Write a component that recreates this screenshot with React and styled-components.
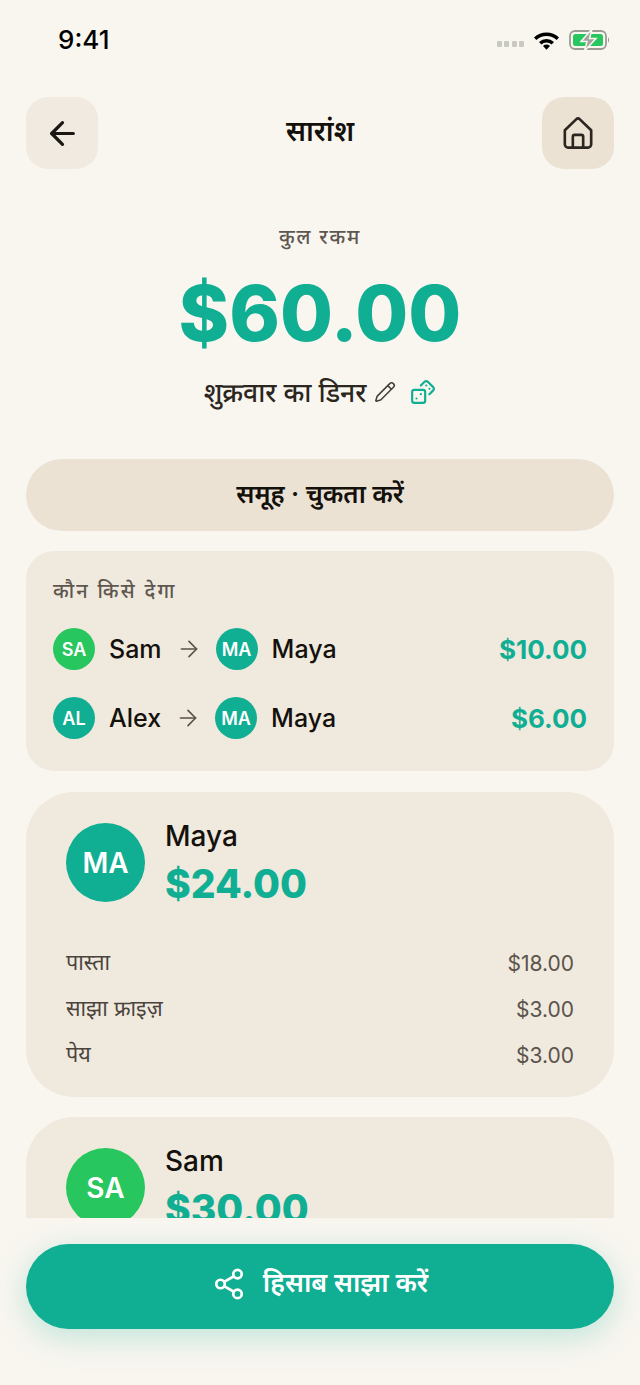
import React from "react";
import styled, { createGlobalStyle } from "styled-components";
import { ArrowLeft, ArrowRight, Dices, Pencil, Share2 } from "lucide-react";

const teal = "#10AE92";
const green = "#27C65E";

const settlements = [
  { from: "Sam", fromCode: "SA", fromColor: green, to: "Maya", amount: "$10.00" },
  { from: "Alex", fromCode: "AL", fromColor: teal, to: "Maya", amount: "$6.00" }
];

const people = [
  {
    name: "Maya",
    code: "MA",
    color: teal,
    total: "$24.00",
    items: [
      ["पास्ता", "$18.00"],
      ["साझा फ्राइज़", "$3.00"],
      ["पेय", "$3.00"]
    ]
  },
  { name: "Sam", code: "SA", color: green, total: "$30.00", items: [] }
];

export default function App() {
  return (
    <Screen>
      <GlobalStyle />
      <StatusBar>
        <Clock>9:41</Clock>
        <StatusIcons>
          <Signal>
            <i />
            <i />
            <i />
            <i />
          </Signal>
          <svg width="27" height="20" viewBox="0 0 27 20">
            <path d="M1 7.500a18 18 0 0 1 25 0l-2.400 2.500a14.500 14.500 0 0 0-20.200 0z" fill="#000" />
            <path d="M6 12a11 11 0 0 1 15 0l-2.400 2.500a7.500 7.500 0 0 0-10.200 0z" fill="#000" />
            <path d="M10 16a5 5 0 0 1 7 0l-3.500 3.800z" fill="#000" />
          </svg>
          <svg width="42" height="22" viewBox="0 0 42 22">
            <rect x="1" y="2" width="36" height="18" rx="5" fill="none" stroke="#9c9c96" strokeWidth="1.800" />
            <rect x="4" y="5" width="30" height="12" rx="2.500" fill={green} />
            <path d="M39 8.500c1.500.5 1.500 4.500 0 5z" fill="#9c9c96" />
            <path d="M23 0 12 12.500h6L15.500 22 27 9.500h-6.500z" fill="#a3a39e" stroke="#f9f6f0" strokeWidth="1.500" />
          </svg>
        </StatusIcons>
      </StatusBar>

      <Header>
        <IconButton>
          <ArrowLeft size={37} strokeWidth={2.100} color="#1b1712" />
        </IconButton>
        <Title>सारांश</Title>
        <IconButton $dark>
          <svg width="32" height="34" viewBox="0 0 34 36" fill="none" stroke="#2b2620" strokeWidth="2.800" strokeLinejoin="round">
            <path d="M3 15 15 3.500a2.900 2.900 0 0 1 4 0L31 15v15a3.500 3.500 0 0 1-3.500 3.500h-21A3.500 3.500 0 0 1 3 30z" />
            <path d="M11.500 33.500V22a2 2 0 0 1 2-2h7a2 2 0 0 1 2 2v11.500" />
          </svg>
        </IconButton>
      </Header>

      <Summary>
        <TotalLabel>कुल रकम</TotalLabel>
        <Total>$60.00</Total>
        <BillName>
          शुक्रवार का डिनर
          <Pencil size={22} strokeWidth={1.700} color="#45403a" />
          <DiceWrap>
            <Dices size={26} strokeWidth={2} color={teal} />
          </DiceWrap>
        </BillName>
      </Summary>

      <GroupPill>समूह · चुकता करें</GroupPill>

      <SettleCard>
        <SettleLabel>कौन किसे देगा</SettleLabel>
        {settlements.map(s => (
          <SettleRow key={s.from}>
            <SmallAvatar $color={s.fromColor}>{s.fromCode}</SmallAvatar>
            <RowName>{s.from}</RowName>
            <ArrowRight size={26} strokeWidth={1.500} color="#5b5044" />
            <SmallAvatar $color={teal}>MA</SmallAvatar>
            <RowName>{s.to}</RowName>
            <RowAmount>{s.amount}</RowAmount>
          </SettleRow>
        ))}
      </SettleCard>

      {people.map(p => (
        <PersonCard key={p.name}>
          <PersonHead>
            <BigAvatar $color={p.color}>{p.code}</BigAvatar>
            <div>
              <PersonName>{p.name}</PersonName>
              <PersonTotal>{p.total}</PersonTotal>
            </div>
          </PersonHead>
          {p.items.length > 0 && (
            <Items>
              {p.items.map(([label, price]) => (
                <Item key={label}>
                  <ItemLabel>{label}</ItemLabel>
                  <Price>{price}</Price>
                </Item>
              ))}
            </Items>
          )}
        </PersonCard>
      ))}

      <Footer>
        <ShareButton>
          <Share2 size={34} strokeWidth={1.900} color="#fff" />
          <span>हिसाब साझा करें</span>
        </ShareButton>
      </Footer>
    </Screen>
  );
}

const GlobalStyle = createGlobalStyle`
  html, body {
    margin: 0;
    padding: 0;
    background: #F9F6F0;
  }
  * {
    box-sizing: border-box;
  }
`;

const Screen = styled.div`
  position: relative;
  width: 640px;
  height: 1385px;
  overflow: hidden;
  padding: 0 26px;
  background: #F9F6F0;
  color: #14110d;
  font-family: Inter, "Noto Sans Devanagari", "Noto Sans", sans-serif;
`;

const StatusBar = styled.div`
  height: 97px;
  margin: 0 3px 0 32px;
  padding-top: 25px;
  display: flex;
  justify-content: space-between;
  align-items: flex-start;
`;

const Clock = styled.div`
  font-size: 26px;
  line-height: 30px;
  font-weight: 500;
  color: #000;
`;

const StatusIcons = styled.div`
  display: flex;
  align-items: center;
  gap: 9px;
  margin-top: 4px;
`;

const Signal = styled.div`
  display: flex;
  gap: 2.500px;
  margin-top: 8px;
  i {
    width: 5px;
    height: 6px;
    border-radius: 1px;
    background: #c9c8c3;
  }
`;

const Header = styled.div`
  display: flex;
  justify-content: space-between;
  align-items: center;
`;

const IconButton = styled.div`
  width: 72px;
  height: 72px;
  border-radius: 22px;
  display: flex;
  align-items: center;
  justify-content: center;
  background: ${p => (p.$dark ? "#EBE2D4" : "#F0EAE0")};
`;

const Title = styled.div`
  font-size: 28px;
  font-weight: 600;
`;

const Summary = styled.div`
  display: flex;
  flex-direction: column;
  align-items: center;
  padding-top: 54px;
`;

const TotalLabel = styled.div`
  font-size: 20px;
  line-height: 28px;
  font-weight: 500;
  letter-spacing: 1.800px;
  color: #5e5750;
`;

const Total = styled.div`
  margin-top: 16px;
  font-size: 76.700px;
  line-height: 92px;
  font-weight: 800;
  color: ${teal};
`;

const BillName = styled.div`
  margin-top: 15px;
  display: flex;
  align-items: center;
  gap: 8px;
  font-size: 26.500px;
  line-height: 36px;
  font-weight: 500;
  color: #2b2620;
`;

const DiceWrap = styled.span`
  display: flex;
  margin-left: 6px;
`;

const GroupPill = styled.div`
  height: 72px;
  margin-top: 49px;
  border-radius: 36px;
  display: flex;
  align-items: center;
  justify-content: center;
  background: #EBE2D4;
  font-size: 25.500px;
  font-weight: 600;
`;

const SettleCard = styled.div`
  height: 220px;
  margin-top: 20px;
  padding: 26px 27px 0;
  border-radius: 28px;
  background: #F0E9DE;
`;

const SettleLabel = styled.div`
  font-size: 20px;
  line-height: 28px;
  font-weight: 500;
  letter-spacing: 2.200px;
  color: #5e5750;
  margin-bottom: 23px;
`;

const SettleRow = styled.div`
  height: 42px;
  margin-bottom: 27px;
  display: flex;
  align-items: center;
  gap: 14px;
`;

const SmallAvatar = styled.div`
  width: 42px;
  height: 42px;
  border-radius: 50%;
  flex: none;
  display: flex;
  align-items: center;
  justify-content: center;
  background: ${p => p.$color};
  color: #fff;
  font-size: 18px;
  font-weight: 600;
`;

const RowName = styled.div`
  font-size: 25px;
  font-weight: 500;
  color: #14110d;
`;

const RowAmount = styled.div`
  margin-left: auto;
  font-size: 26px;
  font-weight: 700;
  color: ${teal};
`;

const PersonCard = styled.div`
  margin-top: 21px;
  padding: 31px 40px 28px;
  border-radius: 48px;
  background: #F0E9DE;
  & + & {
    margin-top: 20px;
  }
`;

const PersonHead = styled.div`
  display: flex;
  gap: 20px;
`;

const BigAvatar = styled.div`
  width: 79px;
  height: 79px;
  border-radius: 50%;
  flex: none;
  display: flex;
  align-items: center;
  justify-content: center;
  background: ${p => p.$color};
  color: #fff;
  font-size: 28px;
  font-weight: 600;
`;

const PersonName = styled.div`
  font-size: 28px;
  line-height: 28px;
  font-weight: 500;
  margin-top: -1px;
`;

const PersonTotal = styled.div`
  margin-top: 9px;
  font-size: 39px;
  line-height: 50px;
  font-weight: 800;
  color: ${teal};
`;

const Items = styled.div`
  margin-top: 40px;
  display: flex;
  flex-direction: column;
  gap: 18px;
`;

const Item = styled.div`
  height: 28px;
  display: flex;
  justify-content: space-between;
  align-items: center;
  font-size: 21.500px;
  color: #4a443d;
`;

const ItemLabel = styled.span`
  padding-top: 2px;
`;

const Price = styled.span`
  font-size: 21px;
  color: #5a544c;
`;

const Footer = styled.div`
  position: absolute;
  left: 0;
  right: 0;
  bottom: 0;
  height: 167px;
  padding: 26px 26px 0;
  background: #F9F6F0;
`;

const ShareButton = styled.div`
  height: 85px;
  padding-bottom: 5px;
  border-radius: 43px;
  display: flex;
  align-items: center;
  justify-content: center;
  gap: 17px;
  background: ${teal};
  color: #fff;
  font-size: 26.500px;
  font-weight: 600;
  box-shadow: 0 8px 32px rgba(16, 174, 146, 0.25);
`;
